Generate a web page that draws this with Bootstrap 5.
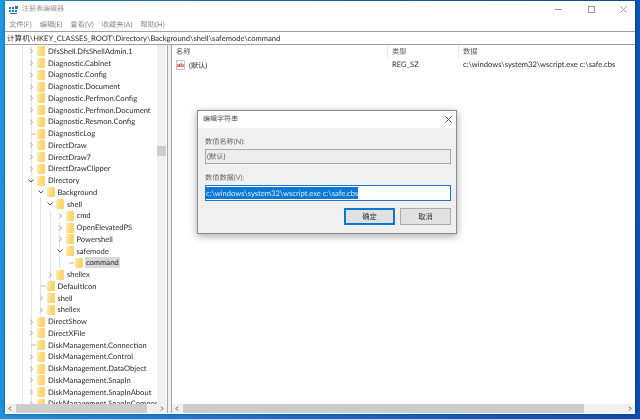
<!DOCTYPE html>
<html lang="zh-CN">
<head>
  <meta charset="UTF-8">
  <title>注册表编辑器</title>
  <link rel="stylesheet" href="https://cdn.jsdelivr.net/npm/bootstrap@5.3.0/dist/css/bootstrap.min.css">
  <style>
    html, body { height: 100%; }
    body {
      margin: 0;
      overflow: hidden;
      background: linear-gradient(100deg, #1c9be0 0%, #1272cc 50%, #0a4eb0 100%);
      font-family: Lato, "Noto Sans CJK SC", sans-serif;
      font-size: 7.6px;
      line-height: 11px;
      color: #2b2b2b;
      text-rendering: geometricPrecision;
    }
    .desk { height: 100%; padding: 1px 5px 5px 5px; }
    .reg-win {
      position: relative;
      height: 413px;
      padding-bottom: 1px;
      background: #fff;
      filter: blur(.4px);
      box-shadow: 0 0 3px rgba(0,0,0,.4);
    }
    .cjk-text { font-size: 7.2px; }
    .title-bar { height: 17px; padding-left: 4px; color: #999; }
    .title-bar .title-text { margin-left: 4px; font-size: 7px; }
    .win-ctl { width: 80px; justify-content: space-between; padding-right: 8px; margin-left: auto; }
    .menu-bar { height: 12px; padding-left: 4px; gap: 8px; color: #888; margin-bottom: 1px; font-size: 7.3px; }
    .addr-bar {
      height: 14px;
      border-top: 1px solid #a0a0a0;
      border-bottom: 1px solid #a0a0a0;
      padding-left: 2px;
      line-height: 12px;
      white-space: nowrap;
    }
    .panes { flex: 1; min-height: 0; }
    .tree-pane { width: 163px; border-right: 1px solid #a8a8a8; position: relative; }
    .split-gap { width: 4px; background: #f0f0f0; border-right: 1px solid #a8a8a8; }
    .list-pane { flex: 1; min-width: 0; position: relative; }
    .tree-body { flex: 1; min-height: 0; overflow: hidden; }
    .tree-rows { flex: 1; min-width: 0; overflow: hidden; padding-top: .5px; }
    .tree-row { height: 11.76px; white-space: nowrap; --line: #e4e4e4; }
    .guide-a { background: linear-gradient(var(--line), var(--line)) 17px 0/1px 100% no-repeat,
                          linear-gradient(var(--line), var(--line)) 26px 0/1px 100% no-repeat; }
    .guide-b { background: linear-gradient(var(--line), var(--line)) 17px 0/1px 100% no-repeat,
                          linear-gradient(var(--line), var(--line)) 26px 0/1px 100% no-repeat,
                          linear-gradient(var(--line), var(--line)) 35px 0/1px 100% no-repeat; }
    .guide-c { background: linear-gradient(var(--line), var(--line)) 17px 0/1px 100% no-repeat,
                          linear-gradient(var(--line), var(--line)) 26px 0/1px 100% no-repeat,
                          linear-gradient(var(--line), var(--line)) 35px 0/1px 100% no-repeat,
                          linear-gradient(var(--line), var(--line)) 45px 0/1px 100% no-repeat; }
    .guide-d { background: linear-gradient(var(--line), var(--line)) 17px 0/1px 100% no-repeat,
                          linear-gradient(var(--line), var(--line)) 26px 0/1px 100% no-repeat,
                          linear-gradient(var(--line), var(--line)) 35px 0/1px 100% no-repeat,
                          linear-gradient(var(--line), var(--line)) 45px 0/1px 100% no-repeat,
                          linear-gradient(var(--line), var(--line)) 54px 0/1px 100% no-repeat; }
    .lv0 { padding-left: 22px; }
    .lv1 { padding-left: 31.5px; }
    .lv2 { padding-left: 41px; }
    .lv3 { padding-left: 50.5px; }
    .lv4 { padding-left: 60px; }
    .arrow { width: 9px; flex: none; margin-right: 1px; }
    .folder {
      width: 8px; height: 10px; flex: none; margin-right: 3px;
      background: linear-gradient(100deg, #ffeebb, #fdd66f 60%);
      border-radius: 1px;
    }
    .row-sel { background: #d9d9d9; padding: 0 1px; margin-left: -1px; }
    .v-bar { width: 9px; background: #f0f0f0; position: relative; flex: none; margin-right: 1px; }
    .v-thumb { position: absolute; top: 101px; left: 0; right: 0; height: 10px; background: #cdcdcd; }
    .h-bar { height: 9px; background: #f0f0f0; flex: none; }
    .h-thumb { background: #cdcdcd; flex: 1; margin: 0 1px; }
    .h-space-s { width: 9px; }
    .h-space { width: 40px; }
    .list-head { height: 14px; line-height: 14px; color: #555; font-size: 7.3px; }
    .col-name { width: 216px; padding-left: 4px; border-right: 1px solid #e8e8e8; }
    .col-type { width: 71px; padding-left: 4px; border-right: 1px solid #e8e8e8; }
    .col-data { padding-left: 4px; }
    .list-row { height: 12px; white-space: nowrap; }
    .ab-mark { font-family: "Liberation Sans", sans-serif; font-size: 6px; font-weight: 700; fill: #c8322b; }
    .edit-box {
      position: absolute;
      left: 192px; top: 109px;
      width: 260px; height: 124px;
      background: #f0f0f0;
      border: 1px solid #8c8c8c;
      box-shadow: 0 2px 8px rgba(0,0,0,.35);
    }
    .edit-head { height: 17px; background: #fff; padding-left: 5px; padding-right: 4px; color: #555; font-size: 7px; }
    .edit-body { padding: 6px 5px 0 7px; color: #666; }
    .edit-label { height: 12px; line-height: 15px; font-size: 7.2px; }
    .name-field {
      height: 15px; margin-top: 3px; margin-bottom: 6px;
      background: #ececec; border: 1px solid #a8a8a8; padding-left: 1px; line-height: 13px; color: #555; font-size: 7.3px;
    }
    .data-field {
      height: 16px; margin-top: 3px;
      background: #fff; border: 1px solid #1a78d0; padding: 1px 0; line-height: 12px;
      white-space: nowrap;
    }
    .data-field span { background: #0a78d7; color: #dfefff; display: inline-block; height: 12px; }
    .btn-line { gap: 5px; justify-content: flex-end; margin-top: 7px; }
    .dlg-btn {
      width: 51px; height: 17px; padding: 0; border-radius: 0;
      background: #e1e1e1; border: 1px solid #adadad; font-size: 7.3px; line-height: 14px; color: #333;
    }
    .dlg-btn.is-default { border: 2px solid #0a78d7; line-height: 12px; }
  </style>
</head>
<body>
  <div class="desk">
    <div class="reg-win d-flex flex-column">

      <div class="title-bar d-flex align-items-center">
        <svg width="9" height="9" viewBox="0 0 9 9"><path fill="#1c7fc4" d="M0 2h2v2H0zM3 2h2v2H3zM6 1h3v3H6zM0 5h2v2H0zM3 5h2v2H3zM6 5h2v2H6zM1 8h7v1H1z"/></svg>
        <span class="title-text">注册表编辑器</span>
        <div class="win-ctl d-flex align-items-center">
          <svg width="7" height="7" viewBox="0 0 7 7"><path stroke="#999" d="M0 3.5h7"/></svg>
          <svg width="7" height="7" viewBox="0 0 7 7"><rect x=".5" y=".5" width="6" height="6" fill="none" stroke="#999"/></svg>
          <svg width="7" height="7" viewBox="0 0 7 7"><path stroke="#999" d="M.5.5l6 6M6.5.5l-6 6"/></svg>
        </div>
      </div>

      <div class="menu-bar d-flex align-items-center">
        <span>文件(F)</span><span>编辑(E)</span><span>查看(V)</span><span>收藏夹(A)</span><span>帮助(H)</span>
      </div>

      <div class="addr-bar">计算机\HKEY_CLASSES_ROOT\Directory\Background\shell\safemode\command</div>

      <div class="panes d-flex">
        <div class="tree-pane d-flex flex-column">
          <div class="tree-body d-flex">
            <div class="tree-rows" id="treeRows"></div>
            <div class="v-bar">
              <div class="v-thumb"></div>
            </div>
          </div>
          <div class="h-bar d-flex align-items-stretch">
            <svg width="10" height="9" viewBox="0 0 10 9"><path fill="none" stroke="#555" d="M6 2.5l-2 2 2 2"/></svg>
            <div class="h-thumb"></div>
            <div class="h-space-s"></div>
            <svg width="10" height="9" viewBox="0 0 10 9"><path fill="none" stroke="#555" d="M4 2.5l2 2-2 2"/></svg>
          </div>
        </div>
        <div class="split-gap"></div>
        <div class="list-pane d-flex flex-column">
          <div class="flex-grow-1">
            <div class="list-head d-flex">
              <div class="col-name">名称</div>
              <div class="col-type">类型</div>
              <div class="col-data">数据</div>
            </div>
            <div class="list-row d-flex">
              <div class="col-name border-0 d-flex align-items-center">
                <svg width="9" height="10" viewBox="0 0 9 10" class="me-1"><rect x=".5" y=".5" width="8" height="9" fill="#fff" stroke="#c4c4c4"/><text class="ab-mark" x="1" y="6.5">ab</text></svg>
                <span class="cjk-text">(默认)</span>
              </div>
              <div class="col-type border-0">REG_SZ</div>
              <div class="col-data">c:\windows\system32\wscript.exe c:\safe.cbs</div>
            </div>
          </div>
          <div class="h-bar d-flex align-items-stretch">
            <svg width="10" height="9" viewBox="0 0 10 9"><path fill="none" stroke="#555" d="M6 2.5l-2 2 2 2"/></svg>
            <div class="h-thumb"></div>
            <div class="h-space"></div>
            <svg width="10" height="9" viewBox="0 0 10 9"><path fill="none" stroke="#555" d="M4 2.5l2 2-2 2"/></svg>
          </div>
        </div>
      </div>

      <div class="edit-box d-flex flex-column">
        <div class="edit-head d-flex align-items-center justify-content-between">
          <span>编辑字符串</span>
          <svg width="7" height="7" viewBox="0 0 7 7"><path stroke="#444" d="M.5.5l6 6M6.5.5l-6 6"/></svg>
        </div>
        <div class="edit-body">
          <div class="edit-label">数值名称(N):</div>
          <div class="name-field">(默认)</div>
          <div class="edit-label">数值数据(V):</div>
          <div class="data-field"><span>c:\windows\system32\wscript.exe c:\safe.cbs</span></div>
          <div class="btn-line d-flex">
            <button type="button" class="btn dlg-btn is-default">确定</button>
            <button type="button" class="btn dlg-btn">取消</button>
          </div>
        </div>
      </div>
    </div>
  </div>

  <script src="https://cdn.jsdelivr.net/npm/bootstrap@5.3.0/dist/js/bootstrap.bundle.min.js"></script>
  <script>
    // level, arrow (r = closed, d = open, n = none), label
    const treeData = [
      [0, 'r', 'DfsShell.DfsShellAdmin.1'],
      [0, 'r', 'Diagnostic.Cabinet'],
      [0, 'r', 'Diagnostic.Config'],
      [0, 'r', 'Diagnostic.Document'],
      [0, 'r', 'Diagnostic.Perfmon.Config'],
      [0, 'r', 'Diagnostic.Perfmon.Document'],
      [0, 'r', 'Diagnostic.Resmon.Config'],
      [0, 'n', 'DiagnosticLog'],
      [0, 'r', 'DirectDraw'],
      [0, 'r', 'DirectDraw7'],
      [0, 'r', 'DirectDrawClipper'],
      [0, 'd', 'Directory'],
      [1, 'd', 'Background'],
      [2, 'd', 'shell'],
      [3, 'r', 'cmd'],
      [3, 'r', 'OpenElevatedPS'],
      [3, 'r', 'Powershell'],
      [3, 'd', 'safemode'],
      [4, 'n', 'command'],
      [2, 'r', 'shellex'],
      [1, 'n', 'DefaultIcon'],
      [1, 'r', 'shell'],
      [1, 'r', 'shellex'],
      [0, 'r', 'DirectShow'],
      [0, 'r', 'DirectXFile'],
      [0, 'n', 'DiskManagement.Connection'],
      [0, 'r', 'DiskManagement.Control'],
      [0, 'r', 'DiskManagement.DataObject'],
      [0, 'r', 'DiskManagement.SnapIn'],
      [0, 'r', 'DiskManagement.SnapInAbout'],
      [0, 'r', 'DiskManagement.SnapInComponent']
    ];
    const arrows = {
      r: '<path fill="none" stroke="#a6a6a6" d="M3 2.5l2.5 2.5-2.5 2.5"/>',
      d: '<path fill="none" stroke="#555" d="M1.5 3.5l2.5 2.5 2.5-2.5"/>',
      n: '<path fill="none" stroke="#bbb" d="M4 5h5"/>'
    };
    // tree guide lines get deeper inside the expanded Directory branch
    function guideFor(i) {
      if (i >= 15 && i <= 18) return 'guide-d';
      if (i >= 14 && i <= 19) return 'guide-c';
      if (i >= 13 && i <= 22) return 'guide-b';
      return 'guide-a';
    }
    document.getElementById('treeRows').innerHTML = treeData.map(([lv, arrow, label], i) => {
      const selected = label === 'command';
      return `<div class="tree-row d-flex align-items-center lv${lv} ${guideFor(i)}">
        <svg class="arrow" width="9" height="10" viewBox="0 0 9 10">${arrows[arrow]}</svg>
        <span class="folder"></span>
        <span class="${selected ? 'row-sel' : ''}">${label}</span>
      </div>`;
    }).join('');
  </script>
</body>
</html>
